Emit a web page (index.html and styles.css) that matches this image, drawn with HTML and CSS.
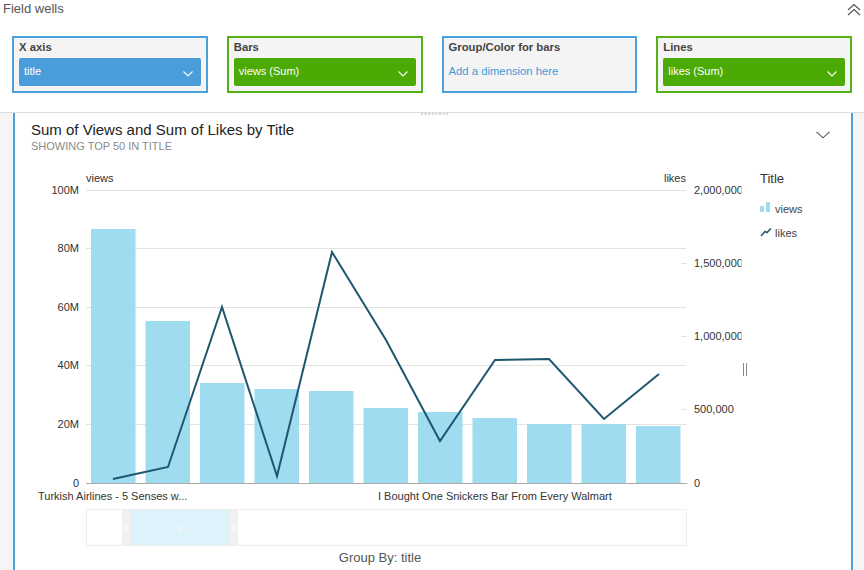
FILE: index.html
```html
<!DOCTYPE html>
<html>
<head>
<meta charset="utf-8">
<link rel="stylesheet" href="styles.css">
</head>
<body>
<div class="top">
  <div class="top-bar">
    <span class="top-title">Field wells</span>
    <svg class="collapse" width="14" height="13" viewBox="0 0 14 13"><path d="M1 7 L7 1.5 L13 7 M1 12 L7 6.5 L13 12" fill="none" stroke="#555" stroke-width="1.2"/></svg>
  </div>
  <div class="wells">
    <div class="well well-blue">
      <div class="well-label">X axis</div>
      <div class="pill pill-blue"><span>title</span><svg width="10" height="6" viewBox="0 0 10 6"><path d="M0.5 0.5 L5 5 L9.5 0.5" fill="none" stroke="#fff" stroke-width="1.1"/></svg></div>
    </div>
    <div class="well well-green">
      <div class="well-label">Bars</div>
      <div class="pill pill-green"><span>views (Sum)</span><svg width="10" height="6" viewBox="0 0 10 6"><path d="M0.5 0.5 L5 5 L9.5 0.5" fill="none" stroke="#fff" stroke-width="1.1"/></svg></div>
    </div>
    <div class="well well-blue">
      <div class="well-label">Group/Color for bars</div>
      <div class="add-dim">Add a dimension here</div>
    </div>
    <div class="well well-green">
      <div class="well-label">Lines</div>
      <div class="pill pill-green"><span>likes (Sum)</span><svg width="10" height="6" viewBox="0 0 10 6"><path d="M0.5 0.5 L5 5 L9.5 0.5" fill="none" stroke="#fff" stroke-width="1.1"/></svg></div>
    </div>
  </div>
</div>
<div class="stage">
  <div class="panel">
    <svg class="drag-dots" width="28" height="2" viewBox="0 0 28 2"><line x1="0" y1="1" x2="28" y2="1" stroke="#a8a8a8" stroke-width="1.2" stroke-dasharray="2 1.6"/></svg>
    <div class="panel-head">
      <div>
        <div class="chart-title">Sum of Views and Sum of Likes by Title</div>
        <div class="chart-sub">SHOWING TOP 50 IN TITLE</div>
      </div>
      <svg class="panel-menu" width="14" height="8" viewBox="0 0 14 8"><path d="M0.5 0.8 L7 6.8 L13.5 0.8" fill="none" stroke="#555" stroke-width="1.1"/></svg>
    </div>
    <svg class="chart" width="836" height="417" viewBox="15 153 836 417">
      <defs><clipPath id="rclip"><rect x="690" y="150" width="51.5" height="350"/></clipPath></defs>
      <g class="grid">
        <line x1="86" y1="190.5" x2="686" y2="190.5"/>
        <line x1="86" y1="248.5" x2="686" y2="248.5"/>
        <line x1="86" y1="307.5" x2="686" y2="307.5"/>
        <line x1="86" y1="365.5" x2="686" y2="365.5"/>
        <line x1="86" y1="424.5" x2="686" y2="424.5"/>
        <line x1="681" y1="263.5" x2="686" y2="263.5"/>
        <line x1="681" y1="336.5" x2="686" y2="336.5"/>
        <line x1="681" y1="409.5" x2="686" y2="409.5"/>
      </g>
      <g class="axis-text">
        <text x="86" y="182">views</text>
        <text x="686" y="182" text-anchor="end">likes</text>
        <text x="79" y="194" text-anchor="end">100M</text>
        <text x="79" y="252" text-anchor="end">80M</text>
        <text x="79" y="311" text-anchor="end">60M</text>
        <text x="79" y="369" text-anchor="end">40M</text>
        <text x="79" y="428" text-anchor="end">20M</text>
        <text x="79" y="487" text-anchor="end">0</text>
        <g clip-path="url(#rclip)">
          <text x="694" y="194">2,000,000</text>
          <text x="694" y="267">1,500,000</text>
          <text x="694" y="340">1,000,000</text>
          <text x="694" y="413">500,000</text>
          <text x="694" y="487">0</text>
        </g>
      </g>
      <g class="bars">
        <rect x="91" y="229" width="44.5" height="254"/>
        <rect x="145.5" y="321" width="44.5" height="162"/>
        <rect x="200" y="383" width="44.5" height="100"/>
        <rect x="254.5" y="389" width="44.5" height="94"/>
        <rect x="309" y="391" width="44.5" height="92"/>
        <rect x="363.5" y="408" width="44.5" height="75"/>
        <rect x="418" y="412" width="44.5" height="71"/>
        <rect x="472.5" y="418" width="44.5" height="65"/>
        <rect x="527" y="424" width="44.5" height="59"/>
        <rect x="581.5" y="424" width="44.5" height="59"/>
        <rect x="636" y="426" width="44.5" height="57"/>
      </g>
      <line class="baseline" x1="86" y1="483.5" x2="687" y2="483.5"/>
      <polyline class="likes-line" points="113,479 168,467 222,307 277,476 332,252 386,340 440,441 495,360 549,359 604,419 659,374"/>
      <g class="axis-text">
        <text x="38" y="500">Turkish Airlines - 5 Senses w...</text>
        <text x="378" y="500">I Bought One Snickers Bar From Every Walmart</text>
      </g>
      <rect class="nav" x="86.5" y="509.5" width="600" height="36"/>
      <rect class="nav-grip" x="122" y="510" width="9" height="35"/>
      <rect class="nav-grip" x="229" y="510" width="9" height="35"/>
      <rect class="nav-sel" x="131" y="510" width="98" height="35"/>
      <g class="grip-marks">
        <line x1="124.5" y1="527" x2="128.5" y2="527"/>
        <line x1="124.5" y1="529" x2="128.5" y2="529"/>
        <line x1="231.5" y1="527" x2="235.5" y2="527"/>
        <line x1="231.5" y1="529" x2="235.5" y2="529"/>
        <line x1="178" y1="526.5" x2="183" y2="526.5" stroke-dasharray="1 1"/>
        <line x1="178" y1="528.5" x2="183" y2="528.5" stroke-dasharray="1 1"/>
        <line x1="178" y1="530.5" x2="183" y2="530.5" stroke-dasharray="1 1"/>
      </g>
      <text class="group-by" x="380" y="562" text-anchor="middle">Group By: title</text>
      <text class="legend-title" x="760" y="183">Title</text>
      <rect class="leg-bar" x="760" y="206" width="4" height="6"/>
      <rect class="leg-bar" x="766" y="202" width="4" height="10"/>
      <text class="legend-item" x="775" y="213">views</text>
      <path class="leg-line" d="M761 236 L765 231.5 L767 232.5 L771 228.5"/>
      <text class="legend-item" x="775" y="237">likes</text>
      <g class="resize">
        <line x1="743.5" y1="363" x2="743.5" y2="376"/>
        <line x1="746.5" y1="363" x2="746.5" y2="376"/>
      </g>
    </svg>
  </div>
</div>
</body>
</html>
```

FILE: styles.css
```css
html, body {
  margin: 0;
  padding: 0;
  background: #fff;
  font-family: "Liberation Sans", Arial, sans-serif;
  width: 864px;
  height: 570px;
  overflow: hidden;
}

.top {
  height: 112px;
  background: #fff;
}

.top-bar {
  display: flex;
  justify-content: space-between;
  align-items: flex-start;
  height: 18px;
  padding: 0 3px 0 3px;
}

.top-title {
  font-size: 13px;
  line-height: 18px;
  color: #555;
}

.collapse {
  margin-top: 3px;
}

.wells {
  display: flex;
  gap: 19px;
  padding: 0 12px;
  margin-top: 18px;
}

.well {
  box-sizing: border-box;
  width: 196px;
  height: 57px;
  background: #f4f4f4;
  padding: 2px 5px 0 5px;
}

.well-blue {
  border: 2px solid #4ca0db;
}

.well-green {
  border: 2px solid #55b117;
}

.well-label {
  font-size: 11.3px;
  font-weight: bold;
  color: #444;
  line-height: 14px;
  height: 14px;
}

.pill {
  margin-top: 4px;
  height: 28px;
  border-radius: 2px;
  display: flex;
  align-items: center;
  justify-content: space-between;
  padding: 0 8px 0 5px;
  color: #fff;
  font-size: 11px;
}

.pill span {
  margin-top: -2px;
}

.pill svg {
  margin-top: 3px;
}

.pill-blue {
  background: #4a9dd8;
}

.pill-green {
  background: #4caa04;
}

.add-dim {
  margin-top: 4px;
  line-height: 26px;
  font-size: 11.3px;
  color: #3d9bdb;
  padding-left: 0;
}

.stage {
  display: flex;
  background: #f5f5f5;
  border-top: 1px solid #dcdcdc;
  height: 457px;
  padding-left: 13px;
}

.panel {
  position: relative;
  width: 836px;
  background: #fff;
  border-left: 2px solid #4ca0db;
  border-right: 2px solid #4ca0db;
}

.drag-dots {
  position: absolute;
  left: 406px;
  top: 0;
  display: block;
}

.panel-head {
  display: flex;
  justify-content: space-between;
  align-items: flex-start;
  padding: 8px 21px 0 16px;
  height: 32px;
}

.chart-title {
  font-size: 15px;
  line-height: 18px;
  color: #222;
}

.chart-sub {
  font-size: 11px;
  line-height: 14px;
  color: #8a8a8a;
}

.panel-menu {
  margin-top: 10px;
}

.chart {
  display: block;
  font-family: "Liberation Sans", Arial, sans-serif;
}

.grid line {
  stroke: #e2e2e2;
  stroke-width: 1;
}

.axis-text text {
  font-size: 11px;
  fill: #333;
}

.bars rect {
  fill: #9fdcf0;
}

.baseline {
  stroke: #aaa;
  stroke-width: 1;
}

.likes-line {
  fill: none;
  stroke: #1f5670;
  stroke-width: 2;
  stroke-linejoin: miter;
}

.nav {
  fill: #fff;
  stroke: #eeeeee;
}

.nav-grip {
  fill: #f1f1f1;
}

.nav-sel {
  fill: #ddf2fb;
}

.grip-marks line {
  stroke: #fff;
  stroke-width: 1;
}

.group-by {
  font-size: 13px;
  fill: #555;
}

.legend-title {
  font-size: 13px;
  fill: #333;
}

.legend-item {
  font-size: 11px;
  fill: #444;
}

.leg-bar {
  fill: #9fdcf0;
}

.leg-line {
  fill: none;
  stroke: #1f5670;
  stroke-width: 1.5;
}

.resize line {
  stroke: #888;
  stroke-width: 1;
}
```
